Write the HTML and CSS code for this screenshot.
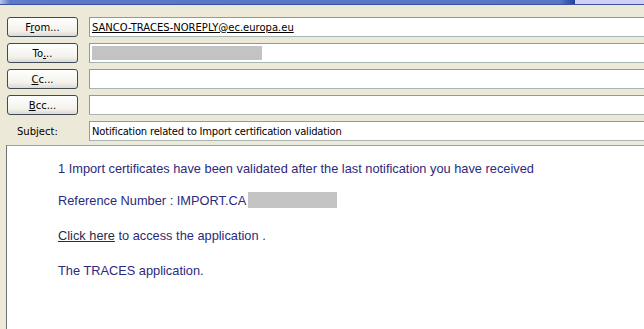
FILE: index.html
```html
<!DOCTYPE html>
<html lang="en">
<head>
    <meta charset="UTF-8">
    <title>Notification related to Import certification validation</title>
    <link rel="stylesheet" href="styles.css">
</head>
<body>
    <div class="title-strip">
        <div class="strip-main"></div>
        <div class="strip-tail"></div>
    </div>

    <div class="header">
        <div class="row">
            <button class="addr-btn">F<u>r</u>om...</button>
            <div class="field"><span class="sender">SANCO-TRACES-NOREPLY@ec.europa.eu</span></div>
        </div>
        <div class="row">
            <button class="addr-btn">To<u>.</u>..</button>
            <div class="field"><span class="masked masked-to"></span></div>
        </div>
        <div class="row">
            <button class="addr-btn"><u>C</u>c...</button>
            <div class="field"></div>
        </div>
        <div class="row">
            <button class="addr-btn"><u>B</u>cc...</button>
            <div class="field"></div>
        </div>
        <div class="row">
            <div class="label">Sub<u>j</u>ect:</div>
            <div class="field subject">Notification related to Import certification validation</div>
        </div>
    </div>

    <div class="message">
        <p class="intro">1 Import certificates have been validated after the last notification you have received</p>
        <p>Reference Number : IMPORT.CA<span class="masked masked-ref"></span></p>
        <p><a href="#">Click here</a> to access the application .</p>
        <p>The TRACES application.</p>
    </div>
</body>
</html>
```

FILE: styles.css
```css
body {
    margin: 0;
    background: #ece9d8;
    font-family: 'Liberation Sans', Arial, sans-serif;
    height: 329px;
    overflow: hidden;
}

.title-strip {
    display: flex;
    height: 4px;
    border-bottom: 1px solid #3a55a8;
}

.strip-main {
    flex: 0 0 575px;
    background: linear-gradient(to right, #b8c6ec 0, #5b78c9 10px, #5a76c6 560px, #1f3f9c 575px);
}

.strip-tail {
    flex: 1;
    background: #cfd0f4;
}

.header {
    padding-top: 12px;
    display: flex;
    flex-direction: column;
    gap: 6px;
}

.row {
    display: flex;
    align-items: center;
    height: 20px;
}

.addr-btn {
    margin-left: 7px;
    width: 71px;
    height: 20px;
    padding: 0;
    border: 1px solid #3c4a5a;
    border-radius: 3px;
    background: linear-gradient(#ffffff, #f3f2ec 70%, #dcdad0);
    font-family: 'DejaVu Sans', Tahoma, sans-serif;
    font-size: 10px;
    color: #000;
}

.label {
    width: 82px;
    padding-left: 17px;
    box-sizing: border-box;
    font-family: 'DejaVu Sans', Tahoma, sans-serif;
    font-size: 10px;
}

.field {
    margin-left: 11px;
    flex: 1;
    height: 20px;
    box-sizing: border-box;
    background: #fff;
    border: 1px solid #8e9c9a;
    border-right: none;
    border-bottom-color: #a9b5b2;
    display: flex;
    align-items: center;
    padding-left: 2px;
    font-family: 'DejaVu Sans', Tahoma, sans-serif;
    font-size: 10px;
    color: #000;
}

.label + .field {
    margin-left: 7px;
}

.subject {
    letter-spacing: -0.2px;
}

.sender {
    text-decoration: underline;
}

.masked {
    display: inline-block;
    background: #c3c3c3;
}

.masked-to {
    width: 170px;
    height: 14px;
}

.masked-ref {
    width: 89px;
    height: 16px;
    margin-left: 2px;
    vertical-align: -3px;
}

.message {
    margin-top: 4px;
    margin-left: 6px;
    height: 176px;
    background: #fff;
    border-top: 1px solid #8ea5a0;
    border-left: 1px solid #6f746f;
    padding: 15px 0 0 51px;
    color: #2c2a7c;
    font-size: 12.8px;
}

.message p {
    margin: 0 0 19px;
    line-height: 16px;
}

.message .intro {
    margin-bottom: 15px;
}

.message a {
    color: #2a2a4a;
}
```
